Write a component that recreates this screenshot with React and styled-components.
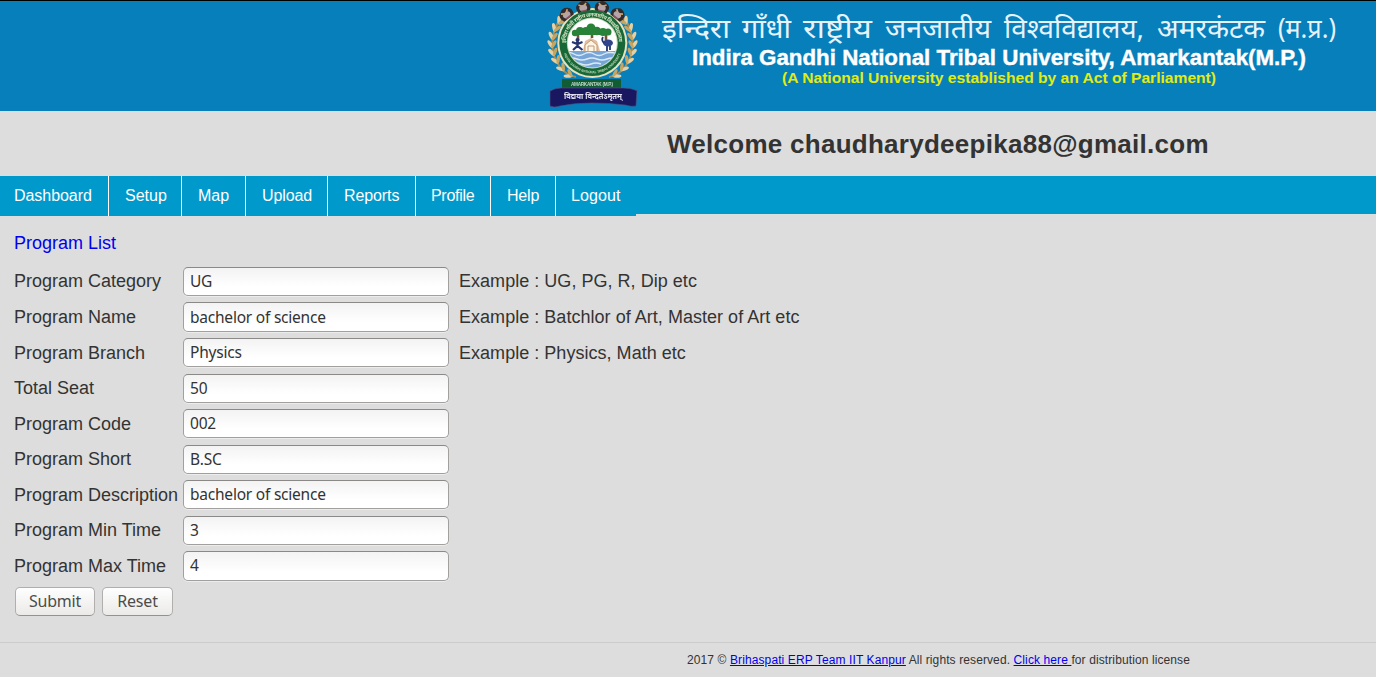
import React from "react";
import styled, { createGlobalStyle } from "styled-components";

const GlobalStyle = createGlobalStyle`
  * { box-sizing: border-box; }
  body {
    margin: 0;
    background: #ddd;
    color: #333;
    font-family: "Liberation Sans", Arial, sans-serif;
    overflow: hidden;
  }
`;

const Page = styled.div`
  height: 677px;
  display: flex;
  flex-direction: column;
  overflow: hidden;
`;

const Banner = styled.header`
  flex: none;
  height: 111px;
  border-top: 1px solid #000;
  background: #067fba;
  padding-left: 540px;
  display: flex;
`;

const EmblemArt = styled.svg`
  flex: none;
  filter: blur(0.45px);
`;

const Welcome = styled.h1`
  flex: none;
  height: 65px;
  margin: 0;
  padding: 1px 0 0 667px;
  font-size: 26px;
  line-height: 65px;
  font-weight: bold;
  letter-spacing: 0.27px;
  white-space: nowrap;
`;

const Nav = styled.nav`
  flex: none;
  height: 38px;
  background: #0099cc;
`;

const NavList = styled.ul`
  display: flex;
  width: 636px;
  height: 40px;
  margin: 0;
  padding: 0;
  list-style: none;
  background: #0099cc;
`;

const NavItem = styled.li`
  flex: none;
  width: ${(p) => p.$width}px;
  padding-left: ${(p) => p.$pad}px;
  border-right: ${(p) => (p.$last ? "0" : "1px solid #fff")};
  color: #fff;
  font-size: 16px;
  line-height: 39px;
  letter-spacing: ${(p) => p.$tracking}px;
  white-space: nowrap;
`;

const Content = styled.main`
  flex: none;
  height: 428px;
  padding: 18px 14px 0;
`;

const ListLink = styled.a`
  display: block;
  height: 32px;
  color: #0000ee;
  font-size: 18px;
  line-height: 22px;
`;

const FieldRow = styled.label`
  display: grid;
  grid-template-columns: 169px 266px auto;
  height: 35.55px;
  padding-top: 2.9px;
  font-size: 18px;
  line-height: 29px;
  white-space: nowrap;
`;

const FieldLabel = styled.span`
  padding-top: 0.55px;
`;

const Hint = styled(FieldLabel)`
  padding-left: 10px;
  letter-spacing: 0.03px;
`;

const Input = styled.input`
  width: 266px;
  height: 29.3px;
  margin: 0;
  padding: 0 6px 1px;
  border: 1px solid #a2a09e;
  border-top-color: #8b8987;
  border-radius: 5px;
  outline: 0;
  background: linear-gradient(#f3f3f3, #fff 70%);
  box-shadow: 0 1px 0 #ececec;
  color: #333;
  font-family: "Noto Sans", sans-serif;
  font-size: 15.5px;
  letter-spacing: -0.22px;
`;

const Actions = styled.div`
  display: flex;
  gap: 7px;
  padding: 3px 0 0 1px;
`;

const Button = styled.button`
  width: ${(p) => p.$width}px;
  height: 29px;
  padding: 0 0 1px;
  border: 1px solid #b1afad;
  border-bottom-color: #949290;
  border-radius: 5px;
  background: linear-gradient(#fefefe, #ebeae8);
  color: #4c4c4c;
  font-family: "Noto Sans", sans-serif;
  font-size: 16px;
  letter-spacing: -0.2px;
`;

const Footer = styled.footer`
  height: 35px;
  padding-left: 687px;
  border-top: 1px solid #ccc;
  font-size: 12px;
  line-height: 35px;
  letter-spacing: 0.105px;
  white-space: pre;

  a { color: #0000ee; }
`;

const Emblem = () => (
  <EmblemArt width="110" height="110" viewBox="0 1 110 110" aria-hidden="true">
    <defs>
      <path id="arcTop" d="M26.1 47 A26.5 26.5 0 1 1 78.5 47" />
      <path id="arcBottom" d="M23.2 52 A30.5 30.5 0 0 0 81.4 52" />
      <clipPath id="scene"><circle cx="52.3" cy="43" r="24.5" /></clipPath>
    </defs>
    {[-1, 1].map((side) => (
      <g key={side} transform={side === 1 ? "translate(105 0) scale(-1 1)" : undefined}>
        <path d="M22 17C10 31 9 53 20 67Q26 75 36 77" fill="none" stroke="#a58d56" strokeWidth="2" />
        {[
          [21, 20, 30], [16, 27, 20], [13, 35, 8], [12, 43, 0],
          [13, 51, -12], [16, 59, -24], [21, 67, -38], [28, 74, -58],
        ].map(([x, y, r]) => (
          <g key={y} transform={`translate(${x} ${y}) rotate(${r})`}>
            <ellipse cx="-2" rx="1.8" ry="4.4" transform="rotate(-32)" fill="#e4d0a4" />
            <ellipse cx="2.2" rx="1.7" ry="4.2" transform="rotate(30)" fill="#c5a55f" />
          </g>
        ))}
      </g>
    ))}
    <circle cx="52.3" cy="43" r="35" fill="#e6e2bd" />
    {[[26, 14, -38], [43, 7, -14], [62, 7, 14], [78, 14, 38]].map(([x, y, r]) => (
      <g key={x} transform={`translate(${x} ${y}) rotate(${r})`}>
        <path d="M-6 5Q-9-2-4-4Q0-8 5-4Q9-1 6 5Z" fill="#332a2b" />
        <ellipse cy="1" rx="4" ry="3" fill="#b6a4ac" />
        <path d="M-4-3L-1-1M4-3L1-1" stroke="#c5a570" strokeWidth="1.7" />
        <path d="M-3 4L3 4" stroke="#89525d" strokeWidth="1.6" />
      </g>
    ))}
    <circle cx="52.3" cy="43" r="33" fill="#176737" />
    <circle cx="52.3" cy="43" r="25.5" fill="#c5dab6" />
    <circle cx="52.3" cy="43" r="24.5" fill="#fff" />
    <g clipPath="url(#scene)">
      <path d="M23 51H80V74H23Z" fill="#77a5d5" />
      <path d="M24 54q5-3 10 0t10 0t10 0t10 0t14 0M27 59q5-2 10 0t10 0t10 0t10 0t10 0M31 64q5-2 10 0t10 0t10 0" fill="none" stroke="#dceafa" strokeWidth="1.4" />
      <path d="M43 51L45 41L51 38L57 41L60 51Z" fill="#e5bea0" />
      <path d="M45 51V45L51 40L57 45V51M48 51V46H54V51" fill="#fff5e6" stroke="#c29a73" strokeWidth="1" />
      <path d="M38 32V40M52 30V38M66 32V40" stroke="#765537" strokeWidth="2.6" />
      <g fill="#288339">
        <circle cx="35" cy="33" r="3.2" /><circle cx="40" cy="31" r="4" />
        <circle cx="46" cy="31" r="4" /><circle cx="51" cy="28" r="4.5" />
        <circle cx="57" cy="31" r="4.2" /><circle cx="63" cy="32" r="4" />
        <circle cx="68" cy="32" r="3.5" /><path d="M35 31H68V35H35Z" />
      </g>
      <path d="M37.5 41v7M32 42l5.5 2 5-2M33 50l4.5-4 5 4" fill="none" stroke="#26356d" strokeWidth="2.2" />
      <circle cx="37.5" cy="40" r="2" fill="#26356d" />
      <ellipse cx="68" cy="43" rx="5" ry="3.5" fill="#31458b" />
      <path d="M64 43q-3-3-1-6M67 46v5M70 46v4" fill="none" stroke="#26356d" strokeWidth="1.8" />
    </g>
    <text fill="#d7e4c1" fontFamily="Noto Sans, sans-serif" fontSize="5.4" fontWeight="bold">
      <textPath href="#arcTop" startOffset="4" textLength="82">इन्दिरा गाँधी राष्ट्रीय जनजातीय विश्वविद्यालय</textPath>
    </text>
    <text fill="#c7dcbc" fontFamily="Liberation Sans, sans-serif" fontSize="3.5" fontWeight="bold">
      <textPath href="#arcBottom" startOffset="2" textLength="73" lengthAdjust="spacingAndGlyphs">INDIRA GANDHI NATIONAL TRIBAL UNIVERSITY</textPath>
    </text>
    <path d="M22 79H81V89H22Z" fill="#125c35" />
    <text x="31" y="86" fill="#bfd8c5" fontFamily="Liberation Sans, sans-serif" fontSize="4.7" fontWeight="bold" textLength="42">AMARKANTAK (M.P.)</text>
    <path d="M10 91Q15 88 21 88H83Q91 88 95 90Q96 91 97 90L96 106Q92 107 85 105Q70 103 52 103T20 106Q14 108 10 106Z" fill="#19175f" stroke="#555084" strokeWidth=".6" />
    <text x="24" y="99" fill="#e1deed" fontFamily="Noto Sans, sans-serif" fontSize="8.5" fontWeight="bold" textLength="58" lengthAdjust="spacingAndGlyphs">विद्यया विन्दतेऽमृतम्</text>
  </EmblemArt>
);

const hindiWords = [
  ["इन्दिरा", 662, 68],
  ["गाँधी", 742, 49],
  ["राष्ट्रीय", 803, 69],
  ["जनजातीय", 885, 106],
  ["विश्वविद्यालय,", 1004, 140],
  ["अमरकंटक", 1157, 108],
  ["(म.प्र.)", 1278, 58],
];

const Wordmark = () => (
  <svg width="726" height="110" viewBox="650 1 726 110" role="img">
    {hindiWords.map(([word, x, width]) => (
      <text key={word} x={x} y="37.5" fill="#e6f3fa" fontFamily="Noto Sans, sans-serif" fontSize="27.5" textLength={width} lengthAdjust="spacingAndGlyphs">
        {word}
      </text>
    ))}
    <text x="692" y="64.5" fill="#fff" stroke="#fff" strokeWidth=".4" fontFamily="Liberation Sans, sans-serif" fontWeight="bold" fontSize="22" textLength="614" lengthAdjust="spacingAndGlyphs">
      Indira Gandhi National Tribal University, Amarkantak(M.P.)
    </text>
    <text x="782" y="83.3" fill="#e2eb13" fontFamily="Liberation Sans, sans-serif" fontWeight="bold" fontSize="15" textLength="434" lengthAdjust="spacingAndGlyphs">
      (A National University established by an Act of Parliament)
    </text>
  </svg>
);

const menu = [
  ["Dashboard", 109, 14, -0.05],
  ["Setup", 73, 16, 0],
  ["Map", 64, 16, 0],
  ["Upload", 82, 16, -0.1],
  ["Reports", 88, 16, -0.1],
  ["Profile", 75, 15, -0.3],
  ["Help", 65, 16, -0.2],
  ["Logout", 80, 15, 0.1],
];

const fields = [
  ["Program Category", "UG", "Example : UG, PG, R, Dip etc"],
  ["Program Name", "bachelor of science", "Example : Batchlor of Art, Master of Art etc"],
  ["Program Branch", "Physics", "Example : Physics, Math etc"],
  ["Total Seat", "50"],
  ["Program Code", "002"],
  ["Program Short", "B.SC"],
  ["Program Description", "bachelor of science"],
  ["Program Min Time", "3"],
  ["Program Max Time", "4"],
];

export default function App() {
  return (
    <Page>
      <GlobalStyle />
      <Banner>
        <Emblem />
        <Wordmark />
      </Banner>
      <Welcome>Welcome chaudharydeepika88@gmail.com</Welcome>
      <Nav>
        <NavList>
          {menu.map(([label, width, pad, tracking], i) => (
            <NavItem key={label} $width={width} $pad={pad} $tracking={tracking} $last={i === menu.length - 1}>
              {label}
            </NavItem>
          ))}
        </NavList>
      </Nav>
      <Content>
        <ListLink>Program List</ListLink>
        {fields.map(([label, value, hint]) => (
          <FieldRow key={label}>
            <FieldLabel>{label}</FieldLabel>
            <Input defaultValue={value} />
            {hint && <Hint>{hint}</Hint>}
          </FieldRow>
        ))}
        <Actions>
          <Button $width={80}>Submit</Button>
          <Button $width={71}>Reset</Button>
        </Actions>
      </Content>
      <Footer>
        2017 © <a href="#team">Brihaspati ERP Team IIT Kanpur</a>{" All rights reserved. "}
        <a href="#license">{"Click here "}</a>for distribution license
      </Footer>
    </Page>
  );
}
